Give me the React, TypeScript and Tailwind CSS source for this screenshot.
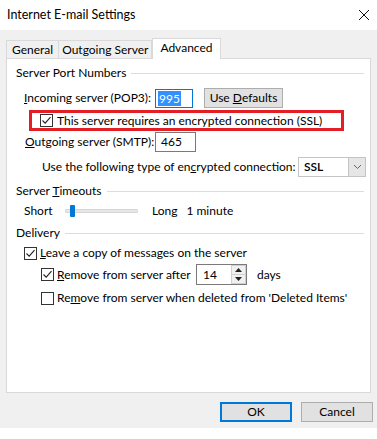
import React from "react";

const F = { fontFamily: 'Lato, "Noto Sans", Arial, sans-serif' };

function Check({ checked }: { checked: boolean }) {
  return (
    <div className="w-[13px] h-[13px] border border-[#333333] bg-white flex items-center justify-center shrink-0">
      {checked && (
        <svg width="11" height="11" viewBox="0 0 11 11">
          <path d="M1.5 5.5 L4.2 8.2 L9.5 2.2" fill="none" stroke="#222" strokeWidth="1.1" />
        </svg>
      )}
    </div>
  );
}

function GroupHeader({ children }: { children: React.ReactNode }) {
  return (
    <div className="flex items-center h-[16px] pr-[6px]">
      <span className="whitespace-nowrap">{children}</span>
      <div className="flex-1 h-px bg-[#dcdcdc] ml-[5px] mt-px" />
    </div>
  );
}

export default function App() {
  return (
    <div className="w-[377px] h-[439px] bg-white text-[12px] text-black overflow-hidden leading-[16px] whitespace-nowrap" style={F}>
      <div className="h-[30px] flex items-center justify-between pl-[7px] pr-[4px]">
        <span className="text-[12.5px]">Internet E-mail Settings</span>
        <svg width="14" height="14" viewBox="0 0 14 14" className="mr-[2px]">
          <path d="M2 2 L12 12 M12 2 L2 12" stroke="#111" strokeWidth="1" />
        </svg>
      </div>
      <div className="h-[398px] bg-[#f0f0f0] flex flex-col">
        <div className="flex items-end h-[28px] pl-[6px]">
          <div className="h-[18px] px-[5px] border border-b-0 border-[#d9d9d9] bg-[#f0f0f0] flex items-center">General</div>
          <div className="h-[18px] px-[3px] border border-b-0 border-l-0 border-[#d9d9d9] bg-[#f0f0f0] flex items-center">Outgoing Server</div>
          <div className="h-[21px] px-[7px] border border-b-0 border-[#d9d9d9] bg-white flex items-center -mb-px relative z-10 pb-[3px]">Advanced</div>
        </div>
        <div className="mx-[6px] h-[335px] bg-white border border-[#d9d9d9] pl-[9px] pt-[6px] flex flex-col">
          <GroupHeader>Server Port Numbers</GroupHeader>
          <div className="flex items-center h-[20px] mt-[7px] pl-[8px]">
            <span className="w-[131px]"><u>I</u>ncoming server (POP3):</span>
            <div className="w-[38px] h-[19px] border border-[#0078d7] flex items-center pl-[2px]">
              <span className="bg-[#3390ff] text-white px-px leading-[15px]">995</span>
            </div>
            <div className="ml-[11px] w-[79px] h-[20px] border border-[#adadad] bg-[#e1e1e1] flex items-center justify-center">
              Use&nbsp;<u>D</u>efaults
            </div>
          </div>
          <div className="ml-[13px] mt-[2px] w-[315px] h-[21px] border-[3px] border-[#e31e24] flex items-center pl-[8px]">
            <Check checked />
            <span className="ml-[4px]">This server requires an encrypted connection (SSL)</span>
          </div>
          <div className="flex items-center h-[20px] mt-[1px] pl-[9px]">
            <span className="w-[130px]"><u>O</u>utgoing server (SMTP):</span>
            <div className="w-[41px] h-[20px] border border-[#7a7a7a] flex items-center pl-[5px]">465</div>
          </div>
          <div className="flex items-center h-[20px] mt-[5px] pl-[26px]">
            <span className="w-[256px]">Use the following type of en<u>c</u>rypted connection:</span>
            <div className="w-[68px] h-[20px] border border-[#c4c4c4] flex items-center justify-between">
              <span className="pl-[5px] font-semibold">SSL</span>
              <div className="w-[17px] h-[18px] bg-[#e6e6e6] border-l border-[#c4c4c4] flex items-center justify-center">
                <svg width="9" height="6" viewBox="0 0 9 6"><path d="M1 1 L4.5 4.5 L8 1" fill="none" stroke="#666" strokeWidth="1" /></svg>
              </div>
            </div>
          </div>
          <div className="mt-[6px]">
            <GroupHeader>Server <u>T</u>imeouts</GroupHeader>
          </div>
          <div className="flex items-center h-[16px] mt-[4px] pl-[8px]">
            <span className="w-[41px]">Short</span>
            <div className="relative w-[73px] h-[12px] flex items-center">
              <div className="w-full h-[4px] bg-[#e7e7e7] border border-[#d6d6d6] rounded-[1px]" />
              <div className="absolute left-[5px] top-0 w-[5px] h-[12px] bg-[#0078d7] rounded-[1px]" />
            </div>
            <span className="ml-[14px]">Long</span>
            <span className="ml-[9px]">1 minute</span>
          </div>
          <div className="mt-[6px]">
            <GroupHeader>Delivery</GroupHeader>
          </div>
          <div className="flex items-center h-[18px] mt-[3px] pl-[8px]">
            <Check checked />
            <span className="ml-[3px]"><u>L</u>eave a copy of messages on the server</span>
          </div>
          <div className="flex items-center h-[21px] mt-[2px] pl-[25px]">
            <Check checked />
            <span className="ml-[3px] w-[139px]"><u>R</u>emove from server after</span>
            <div className="w-[51px] h-[21px] border border-[#7a7a7a] flex items-center">
              <span className="pl-[6px] w-[35px]">14</span>
              <div className="flex flex-col w-[15px] h-[19px]">
                <div className="flex-1 bg-[#f0f0f0] border border-[#d0d0d0] flex items-center justify-center">
                  <svg width="7" height="4" viewBox="0 0 7 4"><path d="M0 4 L3.5 0 L7 4 Z" fill="#222" /></svg>
                </div>
                <div className="flex-1 bg-[#f0f0f0] border border-t-0 border-[#d0d0d0] flex items-center justify-center">
                  <svg width="7" height="4" viewBox="0 0 7 4"><path d="M0 0 L3.5 4 L7 0 Z" fill="#222" /></svg>
                </div>
              </div>
            </div>
            <span className="ml-[10px]">days</span>
          </div>
          <div className="flex items-center h-[18px] mt-[4px] pl-[25px]">
            <Check checked={false} />
            <span className="ml-[3px]">Re<u>m</u>ove from server when deleted from 'Deleted Items'</span>
          </div>
        </div>
        <div className="flex justify-end gap-[9px] pr-[4px] mt-[9px]">
          <div className="w-[72px] h-[20px] border-2 border-[#0078d7] bg-[#e1e1e1] flex items-center justify-center">OK</div>
          <div className="w-[72px] h-[20px] border border-[#adadad] bg-[#e1e1e1] flex items-center justify-center">Cancel</div>
        </div>
      </div>
    </div>
  );
}
